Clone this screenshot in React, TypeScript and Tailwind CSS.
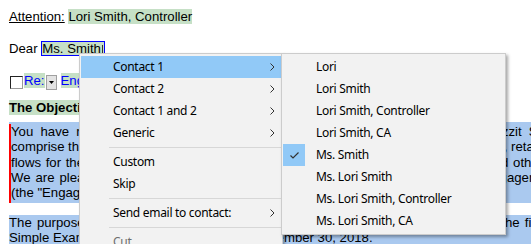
import React from 'react';

type MenuItem = { label: string; sub?: boolean; active?: boolean; disabled?: boolean } | 'sep';

const mainItems: MenuItem[] = [
    { label: 'Contact 1', sub: true, active: true },
    { label: 'Contact 2', sub: true },
    { label: 'Contact 1 and 2', sub: true },
    { label: 'Generic', sub: true },
    'sep',
    { label: 'Custom' },
    { label: 'Skip' },
    'sep',
    { label: 'Send email to contact:', sub: true },
    'sep',
    { label: 'Cut', disabled: true },
    { label: 'Copy', disabled: true },
];

const contactItems = [
    'Lori',
    'Lori Smith',
    'Lori Smith, Controller',
    'Lori Smith, CA',
    'Ms. Smith',
    'Ms. Lori Smith',
    'Ms. Lori Smith, Controller',
    'Ms. Lori Smith, CA',
];

const para1 = [
    'You have requested that Simple Examples audit the financial statements of Fizzit Software Inc.,',
    'comprise the balance sheet as at December 31, 2018, and the statements of income, retained earnings',
    'flows for the year then ended, and the related notes to the financial statements and other information',
    'We are pleased to confirm our acceptance and our understanding of this audit engagement with you',
];

const para2 = 'The purpose of this letter is to set out the terms of our audit engagement and of the financial report';

const Chevron: React.FC = () => (
    <svg width="5" height="8" viewBox="0 0 5 8" className="ml-auto mr-[6px]">
        <polyline points="0.5,0.5 4,4 0.5,7.5" fill="none" stroke="#333" strokeWidth="1" />
    </svg>
);

const JustifiedLine: React.FC<{ text: string }> = ({ text }) => (
    <div className="flex justify-between whitespace-nowrap">
        {text.split(' ').map((w, i) => (
            <span key={i}>{w}</span>
        ))}
    </div>
);

const App: React.FC = () => {
    return (
        <div className="relative w-[531px] h-[244px] overflow-hidden bg-white text-black font-['Liberation_Sans',Arial,sans-serif] text-[13.2px] leading-[15.33px]">
            {/* document */}
            <div className="w-[640px] pl-[9px] pt-[9px] flex flex-col">
                <div className="whitespace-nowrap">
                    <span className="underline">Attention:</span>{' '}
                    <span className="bg-[#c6e0c6]">Lori Smith, Controller</span>
                </div>

                <div className="mt-[17px] whitespace-nowrap">
                    Dear<span className="inline-block w-[0.28em]" />
                    <span className="border border-[#0000ff] bg-[#c6e0c6] inline-flex items-center leading-[13px]">
                        Ms. Smith
                        <span className="inline-block w-[1px] h-[8px] bg-[#333] ml-[1px] mr-[1px]" />
                    </span>
                </div>

                <div className="mt-[16px] flex items-start h-[17px]">
                    <span className="mt-[3px] ml-[1px] w-[13px] h-[13px] bg-white border border-[#222] border-r-[#999] border-b-[#999]" />
                    <span className="ml-[1px] bg-[#c6e0c6] text-[#0000ff]">Re:</span>
                    <span className="mt-[2px] ml-[1px] w-[11px] h-[15px] bg-[#e3e3e3] border border-[#a0a0a0] flex items-center justify-center">
                        <svg width="5" height="3" viewBox="0 0 5 3">
                            <polygon points="0,0 5,0 2.5,3" fill="#000" />
                        </svg>
                    </span>
                    <span className="ml-[4px] bg-[#c6e0c6] text-[#0000ff] whitespace-nowrap">Engagement Letter for Fizzit Software Inc.</span>
                </div>

                <div className="mt-[10px] font-bold">
                    <span className="bg-[#c6e0c6]">The Objective and Scope of the Audit</span>
                </div>

                <div className="mt-[7px] bg-[#aac9ef] pt-[2px]">
                    <div className="border-l-2 border-[#ff0000] pb-[2px] w-[604px]">
                        {para1.map((l, i) => (
                            <JustifiedLine key={i} text={l} />
                        ))}
                        <div className="whitespace-nowrap">(the "Engagement") by means of this letter.</div>
                    </div>
                </div>

                <div className="mt-[12px] bg-[#aac9ef]">
                    <div className="w-[604px]">
                        <JustifiedLine text={para2} />
                        <div className="whitespace-nowrap">Simple Examples audit of the year ended December 30, 2018.</div>
                    </div>
                </div>
            </div>

            {/* context menu */}
            <div className="absolute left-[79px] top-[53px] w-[204px] border border-[#cccccc] bg-[#f2f2f2] py-[2px] px-[1px] shadow-[2px_2px_3px_rgba(0,0,0,0.3)] font-['Noto_Sans',sans-serif] text-[12px] tracking-[-0.3px] leading-none">
                {mainItems.map((item, i) =>
                    item === 'sep' ? (
                        <div key={i} className="h-[7px] pl-[28px] flex items-center">
                            <div className="h-[1px] w-full bg-[#d7d7d7]" />
                        </div>
                    ) : (
                        <div
                            key={i}
                            className={`h-[22px] flex items-center pl-[32px] ${item.active ? 'bg-[#91c9f7]' : ''} ${item.disabled ? 'text-[#6d6d6d]' : 'text-black'}`}
                        >
                            <span>{item.label}</span>
                            {item.sub && <Chevron />}
                        </div>
                    )
                )}
            </div>

            {/* submenu */}
            <div className="absolute left-[281px] top-[53px] w-[225px] border border-[#cccccc] bg-[#f2f2f2] py-[2px] px-[1px] shadow-[2px_2px_3px_rgba(0,0,0,0.35)] font-['Noto_Sans',sans-serif] text-[12px] tracking-[-0.3px] leading-none">
                {contactItems.map((label, i) => (
                    <div key={i} className="relative h-[22px] flex items-center pl-[33px]">
                        {label === 'Ms. Smith' && (
                            <div className="absolute left-0 top-0 w-[22px] h-[22px] bg-[#91c9f7] flex items-center justify-center">
                                <svg width="9" height="7" viewBox="0 0 9 7">
                                    <polyline points="0.5,3.5 3,6 8.5,0.5" fill="none" stroke="#333" strokeWidth="1.2" />
                                </svg>
                            </div>
                        )}
                        <span>{label}</span>
                    </div>
                ))}
            </div>
        </div>
    );
};

export default App;
